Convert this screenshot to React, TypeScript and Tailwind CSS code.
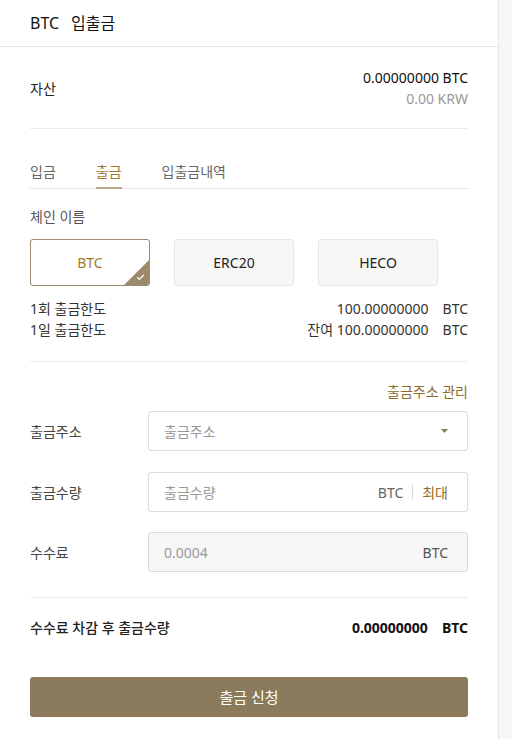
import { Check } from "lucide-react";

const FONT = "font-['Noto_Sans','Noto_Sans_CJK_KR',sans-serif]";

const chains = [
  { key: "BTC", selected: true },
  { key: "ERC20", selected: false },
  { key: "HECO", selected: false },
];

function ChainButton({ label, selected }: { label: string; selected: boolean }) {
  if (selected) {
    return (
      <div className="relative flex h-[47px] w-[120px] items-center justify-center overflow-hidden rounded-[3px] border border-[#9b8a6b] bg-white text-[14px] text-[#a27a2a]">
        {label}
        <div className="absolute bottom-0 right-0 h-[25px] w-[25px] bg-[#9b8a6b] [clip-path:polygon(100%_0,100%_100%,0_100%)]" />
        <Check className="absolute bottom-[3px] right-[4px] h-[9px] w-[9px] text-white" strokeWidth={3} />
      </div>
    );
  }
  return (
    <div className="flex h-[47px] w-[120px] items-center justify-center rounded-[3px] border border-[#e6e6e6] bg-[#f7f7f7] text-[14px] text-[#222]">
      {label}
    </div>
  );
}

function FieldRow({
  label,
  className,
  children,
  muted,
}: {
  label: string;
  className?: string;
  children: React.ReactNode;
  muted?: boolean;
}) {
  return (
    <div className={`flex items-center ${className ?? ""}`}>
      <div className="w-[118px] text-[14px] text-[#444]">{label}</div>
      <div
        className={`flex h-[40px] flex-1 items-center rounded-[3px] border border-[#dcdcdc] px-[15px] text-[14px] ${
          muted ? "bg-[#f7f7f7]" : "bg-white"
        }`}
      >
        {children}
      </div>
    </div>
  );
}

export default function App() {
  return (
    <div className={`flex min-h-[739px] bg-[#f7f7f7] ${FONT}`}>
      <div className="w-[499px] border-r border-[#e6e6e6] bg-white leading-[21px] text-[#222]">
        <div className="flex h-[47px] items-center gap-[12px] border-b border-[#e6e6e6] px-[30px] text-[16px] text-[#111]">
          <span>BTC</span>
          <span>입출금</span>
        </div>

        <div className="px-[30px]">
          <div className="flex items-center justify-between border-b border-[#ebebeb] pb-[19px] pt-[20px]">
            <span className="text-[14px] text-[#222]">자산</span>
            <div className="text-right text-[14px]">
              <div className="text-[#111]">0.00000000 BTC</div>
              <div className="text-[#999]">0.00 KRW</div>
            </div>
          </div>

          <div className="mt-[32px] flex gap-[40px] border-b border-[#e6e6e6] text-[14px]">
            <div className="-mb-px pb-[6px] text-[#666]">입금</div>
            <div className="-mb-px border-b-2 border-[#b5a88f] pb-[5px] text-[#9c7a34]">출금</div>
            <div className="-mb-px pb-[6px] text-[#666]">입출금내역</div>
          </div>

          <div className="border-b border-[#ebebeb] pb-[21px]">
            <div className="mt-[17px] text-[14px] text-[#555]">체인 이름</div>
            <div className="mt-[12px] flex gap-[24px]">
              {chains.map((c) => (
                <ChainButton key={c.key} label={c.key} selected={c.selected} />
              ))}
            </div>
            <div className="mt-[12px] text-[14px] text-[#333]">
              <div className="flex justify-between">
                <span>1회 출금한도</span>
                <span>
                  100.00000000<span className="ml-[14px]">BTC</span>
                </span>
              </div>
              <div className="flex justify-between">
                <span>1일 출금한도</span>
                <span>
                  잔여 100.00000000<span className="ml-[14px]">BTC</span>
                </span>
              </div>
            </div>
          </div>

          <div className="border-b border-[#ebebeb] pb-[25px]">
            <div className="mt-[19px] text-right text-[14px] text-[#8c6d2c]">출금주소 관리</div>
            <FieldRow label="출금주소" className="mt-[9px]">
              <span className="flex-1 text-[#999]">출금주소</span>
              <svg width="7" height="4" viewBox="0 0 7 4" className="mr-[4px]">
                <path d="M0 0h7L3.5 4z" fill="#8a7a5e" />
              </svg>
            </FieldRow>
            <FieldRow label="출금수량" className="mt-[21px]">
              <span className="flex-1 text-[#999]">출금수량</span>
              <span className="text-[#666]">BTC</span>
              <span className="mx-[9px] h-[14px] w-px bg-[#d6d6d6]" />
              <span className="mr-[4px] text-[#8c6d2c]">최대</span>
            </FieldRow>
            <FieldRow label="수수료" className="mt-[20px]" muted>
              <span className="flex-1 text-[#999]">0.0004</span>
              <span className="mr-[4px] text-[#555]">BTC</span>
            </FieldRow>
          </div>

          <div className="flex items-center justify-between pt-[19px] text-[14px] text-[#222]">
            <span className="font-medium">수수료 차감 후 출금수량</span>
            <span className="font-bold text-[#111]">
              0.00000000<span className="ml-[14px]">BTC</span>
            </span>
          </div>

          <button
            type="button"
            className="mt-[39px] flex h-[40px] w-full items-center justify-center rounded-[3px] bg-[#8b7a5c] text-[15px] text-white"
          >
            출금 신청
          </button>
        </div>
      </div>
    </div>
  );
}
